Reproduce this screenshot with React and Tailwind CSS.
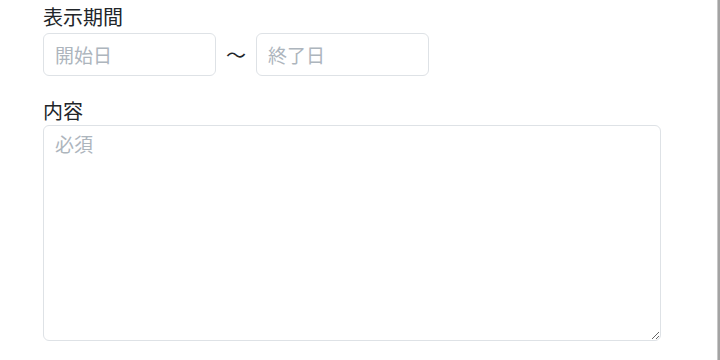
export default function App(){
  return (
    <div className="flex w-[720px] h-[360px] bg-white overflow-hidden" style={{fontFamily:'"Noto Sans CJK JP", "Noto Sans", sans-serif'}}>
      <div className="flex-1 pl-[43px] pt-[4px]">
        <label className="block text-[20px] leading-[26px] text-[#212529] mb-[3px]">表示期間</label>
        <div className="flex items-center">
          <input placeholder="開始日" className="w-[173px] h-[43px] border border-[#dee2e6] rounded-[6px] px-[11px] text-[19px] text-[#212529] placeholder:text-[#adb5bd] outline-none" />
          <span className="w-[40px] text-center text-[20px] text-[#212529]">〜</span>
          <input placeholder="終了日" className="w-[173px] h-[43px] border border-[#dee2e6] rounded-[6px] px-[11px] text-[19px] text-[#212529] placeholder:text-[#adb5bd] outline-none" />
        </div>
        <label className="block mt-[22px] text-[20px] leading-[26px] text-[#212529] mb-[1px]">内容</label>
        <textarea placeholder="必須" className="block w-[618px] h-[216px] border border-[#dee2e6] rounded-[6px] px-[11px] py-[3px] text-[19px] leading-[30px] text-[#212529] placeholder:text-[#adb5bd] outline-none" />
      </div>
      <div className="w-[3px] h-full bg-[#a3a3a3] border-l border-[#c8c8c8]" />
    </div>
  )
}
